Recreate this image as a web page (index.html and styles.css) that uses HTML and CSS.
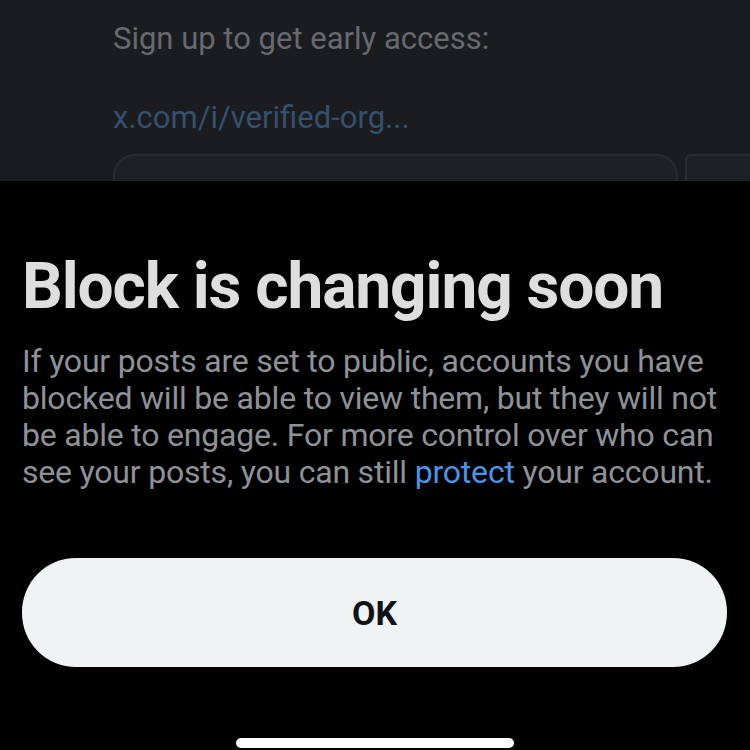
FILE: index.html
```html
<!DOCTYPE html>
<html lang="en">
<head>
  <meta charset="UTF-8">
  <meta name="viewport" content="width=device-width, initial-scale=1.0">
  <title>Block is changing soon</title>
  <link rel="stylesheet" href="styles.css">
</head>
<body>
  <div class="backdrop">
    <div class="backdrop-content">
      <p class="signup">Sign up to get early access:</p>
      <p class="signup-link">x.com/i/verified-org...</p>
      <div class="card-row">
        <div class="card"></div>
        <div class="card card-next"></div>
      </div>
    </div>
  </div>

  <div class="sheet">
    <h1>Block is changing soon</h1>
    <p class="sheet-text">
      If your posts are set to public, accounts you have blocked will be able to view them, but they will not be able to engage. For more control over who can see your posts, you can still <a href="#" class="link">protect</a> your account.
    </p>
    <button class="ok-button">OK</button>
    <div class="home-indicator"></div>
  </div>
</body>
</html>
```

FILE: styles.css
```css
:root {
  --backdrop-bg: #1b1c20;
  --sheet-bg: #000000;
  --heading-color: #dedede;
  --text-color: #8e9297;
  --link-color: #4c94e6;
  --button-bg: #eff3f4;
}

html, body {
  margin: 0;
  padding: 0;
}
body {
  width: 750px;
  height: 750px;
  overflow: hidden;
  background-color: var(--sheet-bg);
  font-family: 'Roboto', 'Liberation Sans', sans-serif;
}

/* dimmed page behind the sheet */
.backdrop {
  height: 181px;
  overflow: hidden;
  background-color: var(--backdrop-bg);
}
.backdrop-content {
  padding: 18px 0 0 113px;
}
.signup {
  margin: 0;
  font-size: 31px;
  line-height: 42px;
  color: #67696e;
  letter-spacing: 0;
}
.signup-link {
  margin: 37px 0 0;
  font-size: 31px;
  line-height: 42px;
  color: #34506d;
  letter-spacing: 0;
}
.card-row {
  display: flex;
  gap: 7px;
  margin-top: 15px;
}
.card {
  flex: 0 0 565px;
  height: 80px;
  border-radius: 22px;
  border: 2px solid #2a2b2f;
  background-color: #1f2024;
  box-sizing: border-box;
}
.card-next {
  flex: 1 0 100px;
  border-radius: 6px 0 0 0;
  border-right: none;
}

/* bottom sheet */
.sheet {
  background-color: var(--sheet-bg);
  border-radius: 46px 46px 0 0;
  padding: 72px 22px 0;
  height: 569px;
  box-sizing: border-box;
  display: flex;
  flex-direction: column;
}
h1 {
  margin: 0;
  font-size: 64px;
  line-height: 68px;
  font-weight: 700;
  color: var(--heading-color);
  letter-spacing: -1.1px;
}
.sheet-text {
  margin: 22px 0 0;
  font-size: 32px;
  line-height: 37px;
  color: var(--text-color);
  letter-spacing: -0.2px;
}
.link {
  color: var(--link-color);
  text-decoration: none;
}
.ok-button {
  margin-top: 67px;
  width: 705px;
  height: 109px;
  border: none;
  border-radius: 54px;
  background-color: var(--button-bg);
  color: #0f1419;
  font-family: 'Roboto', 'Liberation Sans', sans-serif;
  font-size: 34px;
  font-weight: 700;
  cursor: pointer;
}
.home-indicator {
  align-self: center;
  width: 278px;
  height: 10px;
  border-radius: 5px;
  background-color: #ffffff;
  margin-top: 71px;
}
```
